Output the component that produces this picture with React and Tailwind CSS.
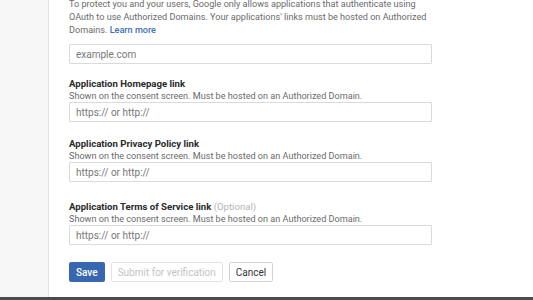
import React from "react";

const fieldGroups = [
  { label: "Application Homepage link", optional: false, top: "mt-[16px]" },
  { label: "Application Privacy Policy link", optional: false, top: "mt-[16px]" },
  { label: "Application Terms of Service link", optional: true, top: "mt-[19px]" },
];

const Field = ({ label, optional, top }) => (
  <div className={top}>
    <p className="text-[9.6px] leading-[12px] font-bold text-[#2a2a2a]">
      {label}
      {optional && <span className="font-normal text-[#b5b5b5]"> (Optional)</span>}
    </p>
    <p className="text-[9.1px] leading-[12px] text-[#6b6b6b]">
      Shown on the consent screen. Must be hosted on an Authorized Domain.
    </p>
    <input
      className="block w-[363px] h-[20px] border border-[#dadada] rounded-[1px] px-[6px] text-[10px] text-[#333] placeholder:text-[#777] outline-none"
      placeholder="https:// or http://"
    />
  </div>
);

export default function App() {
  return (
    <div
      className="w-[533px] h-[300px] flex flex-col bg-white overflow-hidden"
      style={{ fontFamily: "Roboto, 'Liberation Sans', sans-serif" }}
    >
      <div className="flex flex-1 min-h-0">
        <div className="w-[49px] bg-[#f7f7f7] border-r border-[#e3e3e3]" />
        <div className="flex-1 pl-[20px] pt-0">
          <p className="mt-[-2px] w-[368px] text-[9.1px] leading-[13px] text-[#6b6b6b]">
            To protect you and your users, Google only allows applications that authenticate using
            OAuth to use Authorized Domains. Your applications' links must be hosted on Authorized
            Domains. <span className="text-[#3a70bb] font-medium">Learn more</span>
          </p>
          <input
            className="block mt-[7px] w-[363px] h-[20px] border border-[#dadada] rounded-[1px] px-[6px] text-[10px] text-[#333] placeholder:text-[#777] outline-none"
            placeholder="example.com"
          />
          <div className="-mt-[2px]">
            {fieldGroups.map((f) => (
              <Field key={f.label} label={f.label} optional={f.optional} top={f.top} />
            ))}
          </div>
          <div className="mt-[17px] flex gap-[6px]">
            <button className="h-[20px] px-[7px] bg-[#3767b0] text-white text-[10px] font-medium rounded-[2px]">
              Save
            </button>
            <button className="h-[20px] px-[6px] border border-[#e2e2e2] text-[#c3c3c3] text-[10px] rounded-[2px] bg-white">
              Submit for verification
            </button>
            <button className="h-[20px] px-[6px] border border-[#d3d3d3] text-[#333] text-[10px] rounded-[2px] bg-white">
              Cancel
            </button>
          </div>
        </div>
      </div>
      <div className="h-[3px] bg-[#4b4b4b]" />
    </div>
  );
}
